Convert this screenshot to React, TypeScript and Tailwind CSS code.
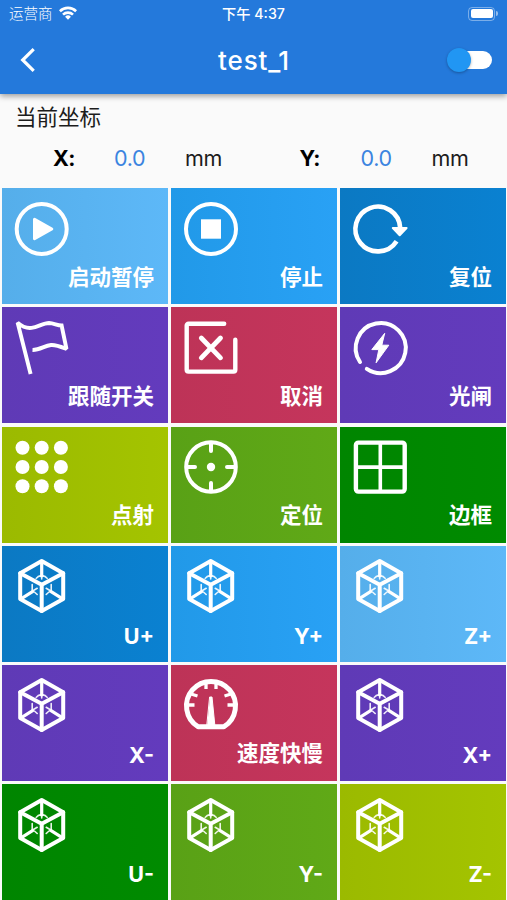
import type { ReactNode } from "react";

const latin = "font-['Inter','Noto_Sans_CJK_SC',sans-serif]";
const cjk = "font-['Noto_Sans_CJK_SC',sans-serif]";

function Icon({ children }: { children: ReactNode }) {
  return (
    <svg
      viewBox="0 0 54 54"
      className="block size-[54px] overflow-visible"
      fill="none"
      stroke="white"
      strokeWidth="4"
      strokeLinecap="round"
      strokeLinejoin="round"
    >
      {children}
    </svg>
  );
}

const Play = () => (
  <Icon>
    <circle cx="26.7" cy="27" r="25" />
    <path d="M19.5 17.2 36.8 27 19.5 36.8Z" fill="white" strokeWidth="3" />
  </Icon>
);

const Stop = () => (
  <Icon>
    <circle cx="27" cy="27" r="25" />
    <path d="M17 17.3h20v19.4H17Z" fill="white" stroke="none" />
  </Icon>
);

const Reset = () => (
  <Icon>
    <path d="M43.6 39.2A22.4 22.4 0 1 1 47.2 26" strokeWidth="4.6" strokeLinecap="butt" />
    <path d="M39.8 26h13.8l-6.9 7.3Z" fill="white" strokeWidth="2" />
  </Icon>
);

const Flag = () => (
  <Icon>
    <path
      d="M15.6 53 2.6 1.6C7 5.5 11 7.600 16.5 6.900 23 6.200 28 2 34 2c5 .2 8 2.400 12.600 2.500L51.500 28C46 25.800 41 23.600 36 24c-6.500.5-11 5.200-18.500 5"
      strokeLinejoin="miter"
      strokeMiterlimit="2"
      strokeLinecap="butt"
      strokeWidth="3.9"
    />
  </Icon>
);

const Cancel = () => (
  <Icon>
    <path d="M40.2 2.8H4.5a1.8 1.8 0 0 0-1.8 1.8v44.2a1.8 1.8 0 0 0 1.8 1.8h45a1.8 1.8 0 0 0 1.8-1.8V18.7" strokeWidth="4.4" />
    <path d="M17.3 17 36.5 36.8M36.5 17 17.3 36.8" strokeWidth="4.8" />
  </Icon>
);

const Shutter = () => (
  <Icon>
    <path d="M7 41A25 25 0 1 1 13.8 47.8" strokeWidth="4" />
    <path d="M31.5 12.6 18.8 28.6h7L23.1 41.8 35.8 24.2h-6.7Z" fill="white" strokeWidth="1" />
  </Icon>
);

const Dots = () => (
  <Icon>
    {[7.8, 27, 46.2].map((y) =>
      [7.5, 26.7, 45.9].map((x) => (
        <circle key={`${x}-${y}`} cx={x} cy={y} r="7" fill="white" stroke="none" />
      )),
    )}
  </Icon>
);

const Target = () => (
  <Icon>
    <circle cx="27" cy="27" r="24.8" />
    <path d="M27 3v8M27 43v8M3 27h8M43 27h8" />
    <circle cx="27" cy="27" r="4.2" fill="white" stroke="none" />
  </Icon>
);

const Frame = () => (
  <Icon>
    <rect x="2.9" y="2.6" width="48.8" height="49" rx="2.5" strokeWidth="4.4" />
    <path d="M27.3 3v48M3 27.1h48" strokeWidth="3.6" />
  </Icon>
);

const Cube = () => (
  <Icon>
    <path d="M26.7 2 48.2 14.3V40L26.7 52 5.2 40V14.3Z" strokeWidth="4" />
    <path d="M5.2 14.3 26.7 25.7 48.2 14.3M26.7 25.7V52" strokeWidth="4" />
    <path d="M26.7 3v14M6 39.8l11.5-7.2M47.600 39.8l-11.5-7.2" strokeWidth="3.2" />
    <path
      d="M26.7 15v5M21.2 19.4c1-1.6 2.8-2.6 5.5-3 2.7.4 4.5 1.4 5.5 3M17.2 25.5v6.8M17.2 32.3l5-3M17.2 32.3c2 .2 3.4 1.5 5 3.2M36.2 25.5v6.8M36.2 32.3l-5-3M36.2 32.3c-2 .2-3.4 1.5-5 3.2"
      strokeWidth="1.6"
      strokeOpacity="0.9"
    />
  </Icon>
);

const Gauge = () => (
  <Icon>
    <path d="M14 48.7A24.5 24.5 0 1 1 40 48.7Z" strokeWidth="5" />
    <path
      d="M4 27h6.5M43.5 27H50M7 16l6.5 2M47 16l-6.5 2M22 5v6M32 5v6"
      strokeWidth="3.3"
      strokeLinecap="butt"
    />
    <path d="M26 19h2l3 30h-8Z" fill="white" strokeWidth="1" />
  </Icon>
);

type Tile = { label: string; icon: () => ReactNode; color: string };

const sky = "bg-linear-to-r from-[#55aeea] to-[#5db8f8]";
const blue = "bg-linear-to-r from-[#2199e8] to-[#29a1f5]";
const navy = "bg-linear-to-r from-[#0b79c3] to-[#0a81d1]";
const violet = "bg-linear-to-r from-[#5f3ab6] to-[#633bbd]";
const rose = "bg-linear-to-r from-[#bd3357] to-[#c5355c]";
const lime = "bg-linear-to-r from-[#9bba00] to-[#a4c400]";
const leaf = "bg-linear-to-r from-[#59a116] to-[#60a917]";
const green = "bg-linear-to-r from-[#008500] to-[#008b00]";

const tiles: Tile[] = [
  { label: "启动暂停", icon: Play, color: sky },
  { label: "停止", icon: Stop, color: blue },
  { label: "复位", icon: Reset, color: navy },
  { label: "跟随开关", icon: Flag, color: violet },
  { label: "取消", icon: Cancel, color: rose },
  { label: "光闸", icon: Shutter, color: violet },
  { label: "点射", icon: Dots, color: lime },
  { label: "定位", icon: Target, color: leaf },
  { label: "边框", icon: Frame, color: green },
  { label: "U+", icon: Cube, color: navy },
  { label: "Y+", icon: Cube, color: blue },
  { label: "Z+", icon: Cube, color: sky },
  { label: "X-", icon: Cube, color: violet },
  { label: "速度快慢", icon: Gauge, color: rose },
  { label: "X+", icon: Cube, color: violet },
  { label: "U-", icon: Cube, color: green },
  { label: "Y-", icon: Cube, color: leaf },
  { label: "Z-", icon: Cube, color: lime },
];

function StatusBar() {
  return (
    <div className="grid h-[27px] grid-cols-3 items-center px-[9px] text-white">
      <div className="flex items-center gap-[6px]">
        <span className={`${cjk} text-[14.5px] leading-none font-light`}>运营商</span>
        <svg viewBox="0 0 18 14" className="mb-[2px] h-[14px] w-[18px]" fill="none" stroke="white" strokeWidth="2.6">
          <path d="M.9 5.2a11.6 11.6 0 0 1 16.2 0M4 8.6a7.2 7.2 0 0 1 10 0" />
          <path d="M6.1 10.7a4.2 4.2 0 0 1 5.8 0L9 13.7Z" fill="white" stroke="none" />
        </svg>
      </div>
      <div className={`${latin} pt-px text-center text-[14.2px] leading-none font-medium whitespace-nowrap`}>
        下午 4:37
      </div>
      <div className="flex items-center justify-end gap-px">
        <div className="h-[14px] w-[27px] rounded-[4px] border border-white/40 p-[1.5px]">
          <div className="h-full rounded-[2px] bg-white" />
        </div>
        <div className="h-[5px] w-[2px] rounded-r-full bg-white/50" />
      </div>
    </div>
  );
}

function Coordinate({ axis }: { axis: string }) {
  return (
    <div className={`${latin} flex w-[246.5px] shrink-0 items-center text-[21.5px] leading-[26px] text-[#1c1c1c]`}>
      <span className="w-[61px] font-bold tracking-[-0.7px] text-black">{axis}:</span>
      <span className="w-[71px] tracking-[-0.3px] text-[#3b84e0]">0.0</span>
      <span className="tracking-[-0.4px]">mm</span>
    </div>
  );
}

export default function App() {
  return (
    <div className="flex h-[900px] w-[507px] flex-col overflow-hidden bg-[#fafafa]">
      <header className="relative h-[94px] shrink-0 bg-[#2479db] shadow-[0_2px_6px_rgba(0,0,0,0.4)]">
        <StatusBar />
        <div className="grid h-[66px] grid-cols-3 items-center pr-[15px] pl-[20px]">
          <svg viewBox="0 0 16 24" className="h-[24px] w-[16px]" fill="none" stroke="white" strokeWidth="3.2">
            <path d="M13.7 1.2 2.7 12l11 10.8" />
          </svg>
          <h1
            className={`${latin} pt-px pr-[4px] text-center text-[26px] leading-none font-medium tracking-[0.85px] text-white`}
          >
            test_1
          </h1>
          <div className="flex justify-end">
            <div className="relative h-[18px] w-[40px] rounded-full bg-white">
              <div className="absolute top-[-3px] left-[-4.5px] size-[24px] rounded-full bg-[#2196f3] shadow-[0_1px_3px_rgba(0,0,0,0.3)]" />
            </div>
          </div>
        </div>
      </header>

      <section className="h-[94.3px] shrink-0 pt-[8px]">
        <div className={`${cjk} pl-[15px] text-[21.5px] leading-[28px] text-[#1c1c1c]`}>当前坐标</div>
        <div className="flex pt-[15px] pl-[53px]">
          <Coordinate axis="X" />
          <Coordinate axis="Y" />
        </div>
      </section>

      <main className="grid shrink-0 grid-cols-3 gap-x-[3px] gap-y-[3.2px] pr-px pl-[2px]">
        {tiles.map(({ label, icon: Glyph, color }) => (
          <button
            key={label}
            className={`${color} flex h-[116px] flex-col justify-between pt-[13.4px] pr-[14px] pb-[13px] pl-[12.6px] text-left`}
          >
            <Glyph />
            {/[+-]/.test(label) ? (
              <span className={`${latin} mb-[-1px] self-end text-[21.5px] leading-[28px] font-bold text-white`}>
                {label}
              </span>
            ) : (
              <span className={`${cjk} mb-[1.6px] self-end text-[21.5px] leading-[28px] font-bold text-white`}>
                {label}
              </span>
            )}
          </button>
        ))}
      </main>
    </div>
  );
}
